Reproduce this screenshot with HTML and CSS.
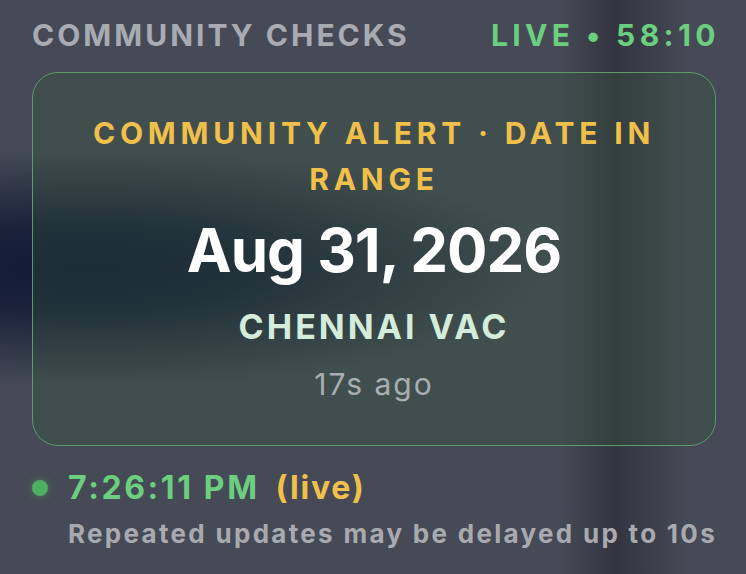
FILE: index.html
```html
<!DOCTYPE html>
<html lang="en">
<head>
<meta charset="utf-8">
<title>Community Checks</title>
<link rel="stylesheet" href="styles.css">
</head>
<body>
<div class="widget">
  <header class="head">
    <span class="head-title">COMMUNITY CHECKS</span>
    <span class="head-live">LIVE • 58:10</span>
  </header>
  <section class="card">
    <div class="card-label">COMMUNITY ALERT · DATE IN RANGE</div>
    <div class="card-date">Aug 31, 2026</div>
    <div class="card-place">CHENNAI VAC</div>
    <div class="card-ago">17s ago</div>
  </section>
  <footer class="foot">
    <div class="foot-row">
      <span class="dot"></span>
      <span class="foot-time">7:26:11 PM</span>
      <span class="foot-live">(live)</span>
    </div>
    <div class="foot-note">Repeated updates may be delayed up to 10s</div>
  </footer>
</div>
</body>
</html>
```
FILE: styles.css
```css
html, body {
  margin: 0;
  padding: 0;
}
body {
  width: 746px;
  height: 574px;
  overflow: hidden;
  font-family: Inter, "Noto Sans", "DejaVu Sans", sans-serif;
  background-color: #464a56;
  background-image:
    radial-gradient(ellipse 460px 120px at 90px 268px, rgba(18,26,52,1) 0%, rgba(18,26,52,0.85) 35%, rgba(18,26,52,0) 100%),
    linear-gradient(90deg, rgba(0,0,0,0) 0px, rgba(0,0,0,0) 560px, rgba(26,28,36,0.45) 615px, rgba(0,0,0,0) 690px, rgba(0,0,0,0) 746px);
}
.widget {
  display: flex;
  flex-direction: column;
  padding: 17px 30px 0 32px;
}
.head {
  display: flex;
  justify-content: space-between;
  align-items: baseline;
  font-size: 30px;
  line-height: 36px;
  font-weight: 700;
}
.head-title {
  color: #a9abb3;
  letter-spacing: 3px;
}
.head-live {
  color: #6ccf7f;
  letter-spacing: 4.4px;
  margin-right: -4px;
}
.card {
  margin-top: 19px;
  height: 374px;
  box-sizing: border-box;
  border: 1.5px solid #5c9c6a;
  border-radius: 26px;
  background: rgba(52, 88, 60, 0.3);
  padding: 37px 36px 0;
  display: flex;
  flex-direction: column;
  align-items: center;
  text-align: center;
}
.card-label {
  color: #f0c04a;
  font-size: 30px;
  line-height: 46px;
  font-weight: 700;
  letter-spacing: 4.8px;
}
.card-date {
  margin-top: 12px;
  color: #ffffff;
  font-size: 60px;
  line-height: 72px;
  font-weight: 700;
  letter-spacing: -1px;
}
.card-place {
  margin-top: 21px;
  color: #d4ecd9;
  font-size: 34px;
  line-height: 40px;
  font-weight: 700;
  letter-spacing: 3px;
}
.card-ago {
  margin-top: 20px;
  color: #a9aeb0;
  font-size: 30px;
  line-height: 34px;
  font-weight: 400;
  letter-spacing: 2px;
}
.foot {
  margin-top: 23px;
  display: flex;
  flex-direction: column;
}
.foot-row {
  display: flex;
  align-items: center;
  font-size: 32px;
  line-height: 38px;
  font-weight: 700;
}
.dot {
  width: 16px;
  height: 16px;
  border-radius: 50%;
  background: #4fb062;
  box-shadow: 0 0 8px rgba(79, 176, 98, 0.5);
  margin-right: 20px;
}
.foot-time {
  color: #6ccf7f;
  letter-spacing: 2.6px;
}
.foot-live {
  margin-left: 16px;
  color: #f0c04a;
  letter-spacing: 1.8px;
}
.foot-note {
  margin-top: 11px;
  margin-right: -20px;
  padding-left: 36px;
  white-space: nowrap;
  color: #a8aab0;
  font-size: 26px;
  line-height: 32px;
  font-weight: 700;
  letter-spacing: 2.3px;
}
```
